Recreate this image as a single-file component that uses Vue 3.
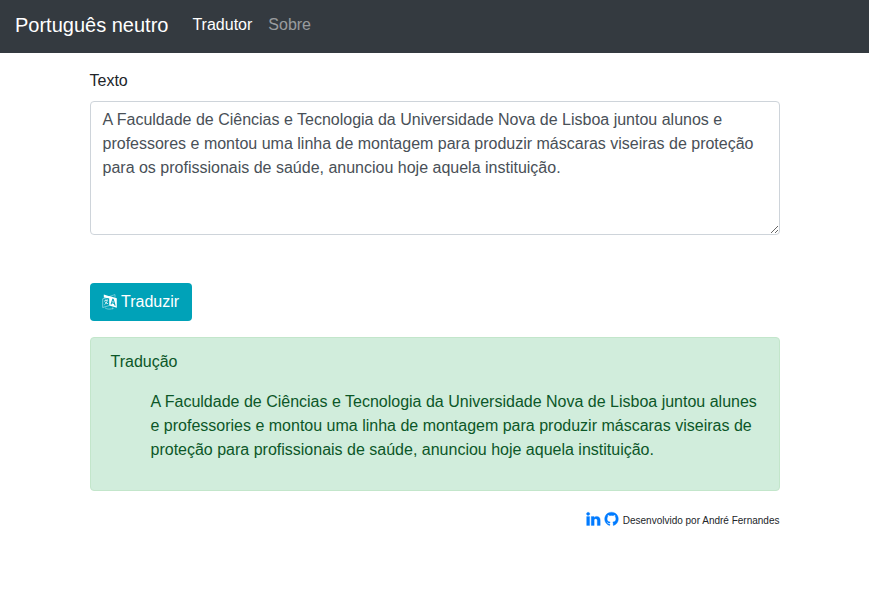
<script setup>
import { ref } from 'vue'

const text = ref('A Faculdade de Ciências e Tecnologia da Universidade Nova de Lisboa juntou alunos e professores e montou uma linha de montagem para produzir máscaras viseiras de proteção para os profissionais de saúde, anunciou hoje aquela instituição.')
const translation = 'A Faculdade de Ciências e Tecnologia da Universidade Nova de Lisboa juntou alunes e professories e montou uma linha de montagem para produzir máscaras viseiras de proteção para profissionais de saúde, anunciou hoje aquela instituição.'
</script>

<template>
  <div class="page">
    <nav class="navbar">
      <a class="brand">Português neutro</a>
      <a class="link active">Tradutor</a>
      <a class="link">Sobre</a>
    </nav>
    <main class="container">
      <label class="label" for="source">Texto</label>
      <textarea id="source" v-model="text" class="field" spellcheck="false"></textarea>
      <button class="button" type="button">
        <svg class="language" viewBox="0 0 15 16" aria-hidden="true">
          <path d="M7.500 3 .7 4.800v8.700l6.800-2" fill="none" stroke="currentColor" stroke-width=".6" opacity=".8" />
          <path d="M2.300 7l3.700-1.200M3.800 5.500l.5 1M5.300 6.500C4.900 8.300 3.800 9.800 2.500 10.700M2.900 7.700c.7 1.100 1.800 1.800 3.200 2" fill="none" stroke="currentColor" stroke-width=".8" />
          <path d="M7.700 2.400 13 .6v3M3 13.900c2.200 1.600 5.600 1.600 8.300.4l-.8-.8m.8.800-1 .8" fill="none" stroke="currentColor" stroke-width=".5" opacity=".8" />
          <path fill="currentColor" d="M1.800.4 8 2.400v2L1.800 3.500z" />
          <path fill="currentColor" fill-rule="evenodd" d="M7.200 2.100 14.800 4.300v9.500L7.200 11.600zM10.500 4.600 8.500 10.300l1.100.3.4-1.300 2 .6.4 1.500 1.300.4L11.700 5zM11 6.200l.8 2.500-1.500-.4z" />
        </svg>
        Traduzir
      </button>
      <section class="result">
        <div>Tradução</div>
        <p class="translation">{{ translation }}</p>
      </section>
      <footer class="footer">
        <svg class="social" viewBox="80 0 1664 1792" aria-hidden="true"><path d="M477 625v991h-330v-991h330zm21-306q1 73-50.500 122t-135.500 49h-2q-82 0-132-49t-50-122q0-74 51.500-122.500t134.500-48.500 133 48.500 51 122.500zm1166 729v568h-329v-530q0-105-40.500-164.500t-126.500-59.500q-63 0-105.500 34.500t-63.500 85.500q-11 30-11 81v553h-329q2-399 2-647t-1-296l-1-48h329v144h-2q20-32 41-56t56.500-52 87-43.500 114.500-15.500q171 0 275 113.500t104 332.500z" /></svg>
        <svg class="social" viewBox="64 0 1664 1792" aria-hidden="true"><path d="M896 128q209 0 385.500 103t279.500 279.500 103 385.500q0 251-146.500 451.500t-378.500 277.500q-27 5-40-7t-13-30q0-3 .5-76.500t.5-134.500q0-97-52-142 57-6 102.500-18t94-39 81-66.500 53-105 20.500-150.500q0-119-79-206 37-91-8-204-28-9-81 11t-92 44l-38 24q-93-26-192-26t-192 26q-16-11-42.500-27t-83.500-38.500-85-13.500q-45 113-8 204-79 87-79 206 0 85 20.500 150t52.500 105 80.500 67 94 39 102.500 18q-39 36-49 103-21 10-45 15t-57 5-65.500-21.500-55.500-62.500q-19-32-48.500-52t-49.500-24l-20-3q-21 0-29 4.500t-5 11.500 9 14 13 12l7 5q22 10 43.500 38t31.500 51l10 23q13 38 44 61.500t67 30 69.500 7 55.500-3.500l23-4q0 38 .5 88.500t.5 54.500q0 18-13 30t-40 7q-232-77-378.500-277.500t-146.500-451.500q0-209 103-385.500t279.500-279.500 385.500-103z" /></svg>
        <span class="credit">Desenvolvido por André Fernandes</span>
      </footer>
    </main>
  </div>
</template>

<style>
body { background: #fff; }
</style>

<style scoped>
.page, .page * { box-sizing: border-box; }
.page { font: 16px/24px "Liberation Sans", Arial, sans-serif; color: #212529; }
.navbar { height: 53px; display: flex; align-items: center; padding: 0 15px 3px; background: #343a40; }
.brand { font-size: 20px; line-height: 30px; color: #fff; margin-right: 16px; }
.link { padding: 0 8px; color: rgba(255, 255, 255, .5); }
.link.active { color: #fff; }
.container { width: 690px; margin-left: 89.5px; padding-top: 16px; }
.label { display: block; margin-bottom: 8px; }
.field { display: block; width: 100%; height: 134px; margin: 0 0 48px; padding: 6px 12px; font: inherit; color: #495057; background: #fff; border: 1px solid #ced4da; border-radius: 4px; resize: vertical; overflow: auto; outline: 0; }
.button { display: flex; align-items: center; gap: 4px; height: 38px; margin: 0 0 16px; padding: 0 13px 1px 12.5px; font: inherit; color: #fff; background: #00a2b8; border: 0; border-radius: 4px; }
.language { width: 15px; height: 16px; }
.result { height: 154px; padding: 12px 20px; color: #0c5728; background: #d1eddc; border: 1px solid #c3e6cb; border-radius: 4px; }
.translation { margin: 16px 0 0 40px; }
.footer { display: flex; justify-content: flex-end; align-items: center; height: 24px; margin-top: 16px; }
.social { width: 15px; height: 16px; margin-right: 3px; overflow: visible; fill: #007bff; stroke: #007bff; stroke-width: 35px; }
.credit { font-size: 10px; line-height: 15px; padding-top: 3px; margin-left: 1px; }
</style>
